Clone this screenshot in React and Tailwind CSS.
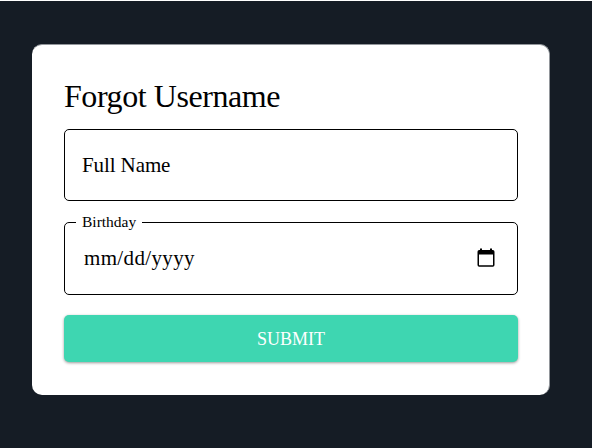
import React from "react";

const CalendarIcon = () => (
  <svg
    className="h-[20px] w-[18px] shrink-0"
    viewBox="0 0 18 20"
    fill="currentColor"
    aria-hidden="true"
  >
    <path
      fillRule="evenodd"
      d="M3 .5h2v1.500h8V.5h2v1.500h.8A1.700 1.700 0 0 1 17.500 3.700V17a1.700 1.700 0 0 1-1.700 1.700H2.200A1.700 1.700 0 0 1 .5 17V3.700A1.700 1.700 0 0 1 2.200 2H3V.5ZM2 6.500v10.700h14V6.500H2Z"
    />
  </svg>
);

const App = () => {
  return (
    <div className="h-screen overflow-hidden border-t border-white bg-[#151c25] pt-[43px] pl-8 font-['Liberation_Serif',serif] text-black">
      <form className="flex h-[351px] w-[518px] flex-col rounded-[10px] border-t border-r border-[#92969b] bg-white pt-[31px] pr-[31px] pl-8">
        <h1 className="h-[53px] text-[32px] leading-[40px] tracking-[-0.43px]">
          Forgot Username
        </h1>

        {/* Full name field */}
        <label className="flex h-[72px] items-center rounded-[5px] border border-black px-[17px] pt-[2px] text-[21px] tracking-[-0.1px]">
          Full Name
        </label>

        {/* Birthday field, label sits in the border */}
        <fieldset className="mt-[13px] h-[81px] rounded-[5px] border border-black px-[11px]">
          <legend className="h-[16px] px-[6px] text-[15.500px] leading-[16px]">
            Birthday
          </legend>
          <div className="flex h-[56px] items-center justify-between pr-[11px] pl-2 text-[21px] tracking-[0.35px]">
            <span className="pt-[2px]">mm/dd/yyyy</span>
            <CalendarIcon />
          </div>
        </fieldset>

        <button
          type="button"
          className="mt-5 h-[47px] rounded-[5px] bg-[#3ed6b1] pt-[2px] text-[18px] text-white shadow-[0_1px_3px_rgba(0,0,0,0.4)]"
        >
          SUBMIT
        </button>
      </form>
    </div>
  );
};

export default App;
